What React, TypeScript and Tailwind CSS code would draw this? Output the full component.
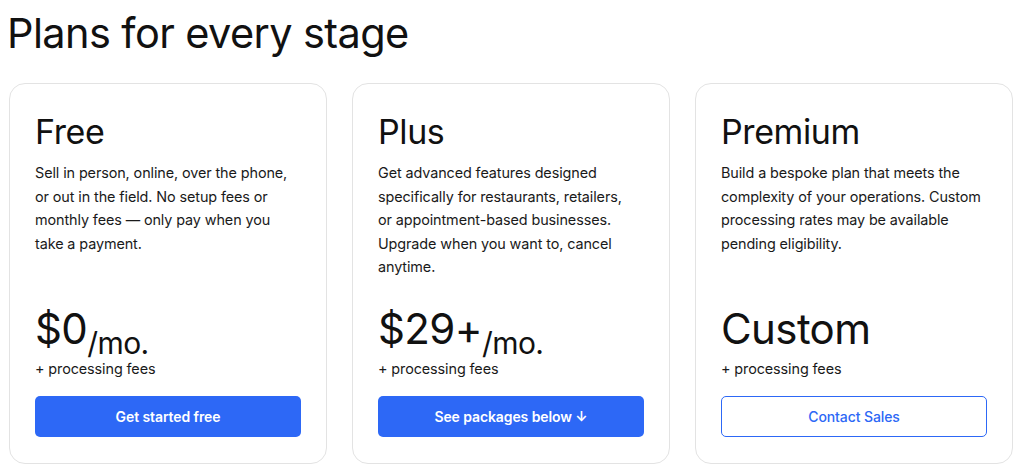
import React from "react";

type Plan = {
  name: string;
  desc: string;
  price: string;
  unit?: string;
  cta: string;
  primary: boolean;
};

const plans: Plan[] = [
  {
    name: "Free",
    desc: "Sell in person, online, over the phone, or out in the field. No setup fees or monthly fees — only pay when you take a payment.",
    price: "$0",
    unit: "/mo.",
    cta: "Get started free",
    primary: true,
  },
  {
    name: "Plus",
    desc: "Get advanced features designed specifically for restaurants, retailers, or appointment-based businesses. Upgrade when you want to, cancel anytime.",
    price: "$29+",
    unit: "/mo.",
    cta: "See packages below ↓",
    primary: true,
  },
  {
    name: "Premium",
    desc: "Build a bespoke plan that meets the complexity of your operations. Custom processing rates may be available pending eligibility.",
    price: "Custom",
    cta: "Contact Sales",
    primary: false,
  },
];

function PlanCard({ plan }: { plan: Plan }) {
  return (
    <div className="flex flex-col h-[381px] rounded-2xl border border-[#e3e3e3] bg-white pl-[25px] pr-[25px] pt-[28px] pb-[26px]">
      <h2 className="text-[34px] leading-[40px] tracking-[-0.4px] text-[#111]">{plan.name}</h2>
      <p className="mt-[9px] mr-[5px] text-[14.4px] leading-[23.5px] tracking-[-0.1px] text-[#1a1a1a]">{plan.desc}</p>

      {/* precio pegado abajo */}
      <div className="mt-auto">
        <div className="flex items-baseline h-[48px] text-[#111]">
          <span className="text-[42px] leading-[48px] tracking-[-0.6px]">{plan.price}</span>
          {plan.unit && (
            <span className="text-[30px] leading-[30px] relative top-[10px] tracking-[-0.6px]">{plan.unit}</span>
          )}
        </div>
        <div className="mt-[6px] text-[14.4px] leading-[20px] tracking-[-0.1px] text-[#1a1a1a]">+ processing fees</div>
        <button
          className={
            plan.primary
              ? "mt-[17px] w-full h-[41px] rounded-[5px] bg-[#2d68f6] text-white text-[14px] font-semibold tracking-[-0.1px]"
              : "mt-[17px] w-full h-[41px] rounded-[5px] border border-[#2d68f6] bg-white text-[#2d68f6] text-[14px] font-medium tracking-[-0.1px]"
          }
        >
          {plan.cta}
        </button>
      </div>
    </div>
  );
}

export default function App() {
  return (
    <div
      className="min-h-screen bg-white pl-[9px] pr-[10px] pt-[8px]"
      style={{ fontFamily: "Inter, 'Noto Sans', sans-serif" }}
    >
      <h1 className="-ml-[2px] text-[41.5px] leading-[50px] tracking-[-0.6px] text-[#111]">Plans for every stage</h1>
      <div className="mt-[25px] grid grid-cols-3 gap-[25px]">
        {plans.map((p) => (
          <PlanCard key={p.name} plan={p} />
        ))}
      </div>
    </div>
  );
}
